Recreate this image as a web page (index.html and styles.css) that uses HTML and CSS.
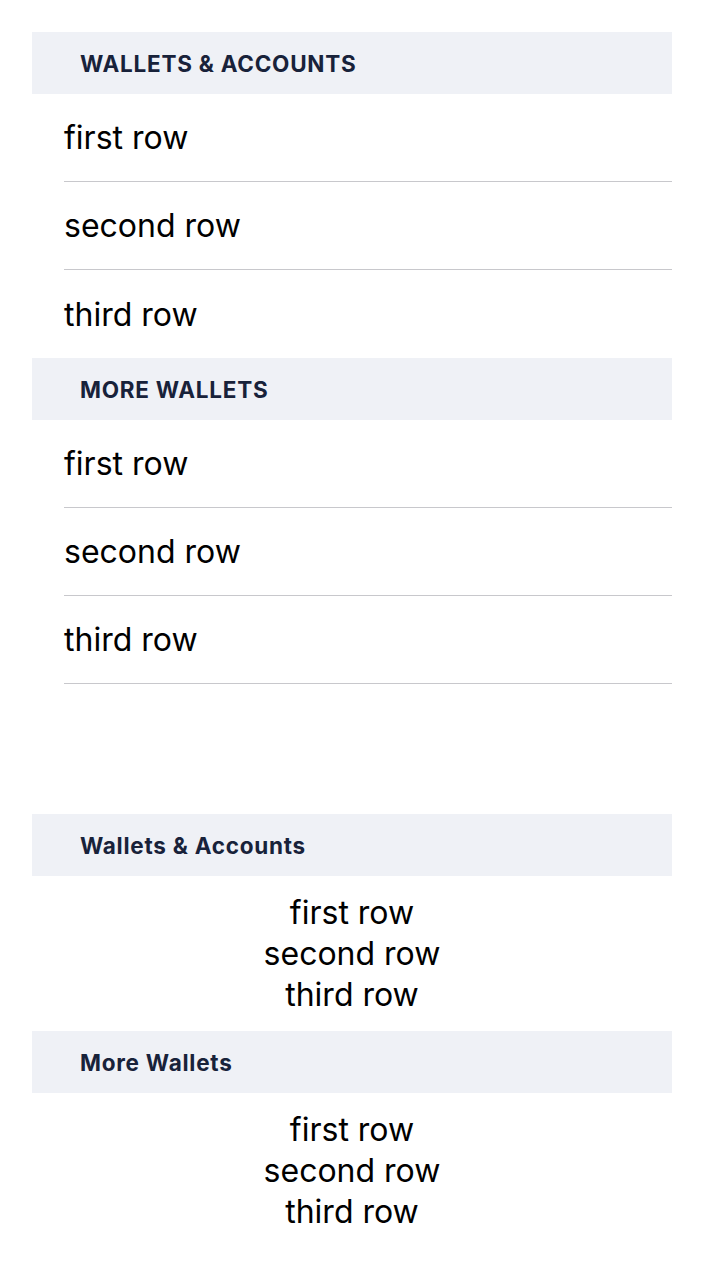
FILE: index.html
```html
<!DOCTYPE html>
<html>
<head>
<meta charset="utf-8">
<link rel="stylesheet" href="styles.css">
</head>
<body>
<div class="page">
  <section class="list">
    <div class="header upper">Wallets &amp; Accounts</div>
    <div class="row">first row</div>
    <div class="row">second row</div>
    <div class="row last">third row</div>
    <div class="header upper">More Wallets</div>
    <div class="row">first row</div>
    <div class="row">second row</div>
    <div class="row">third row</div>
  </section>
  <section class="list compact">
    <div class="header">Wallets &amp; Accounts</div>
    <div class="block">
      <div>first row</div>
      <div>second row</div>
      <div>third row</div>
    </div>
    <div class="header">More Wallets</div>
    <div class="block">
      <div>first row</div>
      <div>second row</div>
      <div>third row</div>
    </div>
  </section>
</div>
</body>
</html>
```

FILE: styles.css
```css
html, body {
  margin: 0;
  padding: 0;
  background: #ffffff;
}
.page {
  padding: 32px 32px 0 32px;
  display: flex;
  flex-direction: column;
  gap: 130px;
  font-family: Inter, "Noto Sans", sans-serif;
}
.list {
  display: flex;
  flex-direction: column;
}
.header {
  height: 62px;
  background: #eff1f6;
  color: #18223a;
  font-size: 22.5px;
  font-weight: 700;
  letter-spacing: 0.75px;
  display: flex;
  align-items: center;
  padding-left: 48px;
}
.header.upper {
  text-transform: uppercase;
}
.row {
  height: 88px;
  box-sizing: border-box;
  margin-left: 32px;
  border-bottom: 1px solid #c8c8cc;
  display: flex;
  align-items: center;
  font-size: 32px;
  color: #000000;
}
.row.last {
  border-bottom: none;
}
.block {
  padding: 16px 0;
  text-align: center;
  font-size: 32px;
  line-height: 41px;
  color: #000000;
}
```
